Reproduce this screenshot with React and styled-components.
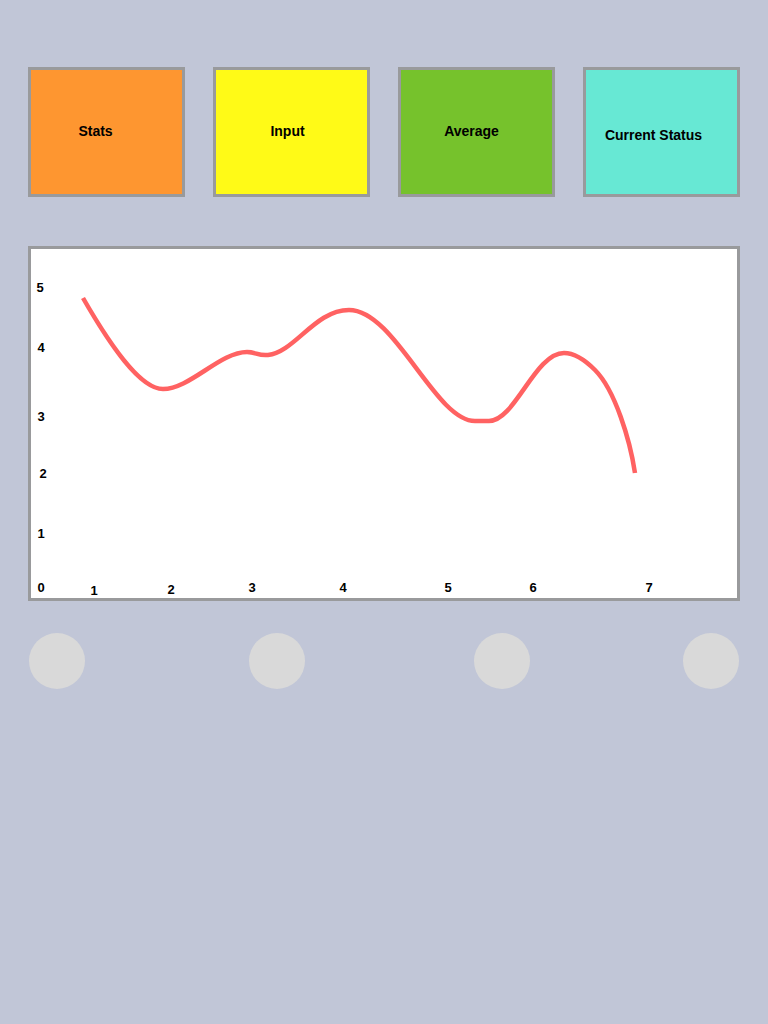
import React from "react";
import styled, { createGlobalStyle } from "styled-components";

const GlobalStyle = createGlobalStyle`
  body {
    margin: 0;
    background: #c1c6d7;
    font-family: "Liberation Sans", Arial, sans-serif;
  }
`;

const tiles = [
  { label: "Stats", color: "#fe9630", dx: -22, dy: -2 },
  { label: "Input", color: "#fffa17", dx: -8, dy: -2 },
  { label: "Average", color: "#76c22c", dx: -10, dy: -2 },
  { label: "Current Status", color: "#67e8d4", dx: -16, dy: 6 },
];

const yLabels = [
  ["5", 40, 287],
  ["4", 41, 347],
  ["3", 41, 416],
  ["2", 43, 473],
  ["1", 41, 533],
  ["0", 41, 587],
];

const xLabels = [
  ["1", 94, 590],
  ["2", 171, 589],
  ["3", 252, 587],
  ["4", 343, 587],
  ["5", 448, 587],
  ["6", 533, 587],
  ["7", 649, 587],
];

// left offsets of the round buttons below the chart
const dotOffsets = [1, 164, 169, 153];

const curve =
  "M83 298 C 110 345, 140 389, 163 389 C 190 389, 220 352, 247 352 " +
  "C 256 352, 258 356, 268 355 C 295 352, 315 310, 349 310 " +
  "C 395 310, 435 421, 475 421 L 489 421 C 515 421, 535 353, 564 353 " +
  "C 575 353, 585 360, 595 370 C 615 390, 630 440, 635 473";

const App = () => {
  return (
    <Page>
      <GlobalStyle />
      <Tiles>
        {tiles.map((t) => (
          <Tile key={t.label} color={t.color} dx={t.dx} dy={t.dy}>
            {t.label}
          </Tile>
        ))}
      </Tiles>
      <Chart>
        <svg width="706" height="349" viewBox="31 249 706 349">
          <path
            d={curve}
            fill="none"
            stroke="#ff6262"
            strokeWidth="4.5"
          />
          {[...yLabels, ...xLabels].map(([text, x, y], i) => (
            <AxisText key={i} x={x} y={y + 4.5} textAnchor="middle">
              {text}
            </AxisText>
          ))}
        </svg>
      </Chart>
      <Dots>
        {dotOffsets.map((o, i) => (
          <Dot key={i} offset={o} />
        ))}
      </Dots>
    </Page>
  );
};

export default App;

const Page = styled.div`
  min-height: 100vh;
  box-sizing: border-box;
  padding: 67px 28px 0 28px;
  width: 768px;
`;

const Tiles = styled.div`
  display: flex;
  gap: 28px;
`;

const Tile = styled.div`
  box-sizing: border-box;
  width: 157px;
  height: 130px;
  border: 3px solid #999a9c;
  background: ${({ color }) => color};
  display: flex;
  align-items: center;
  justify-content: center;
  padding-right: ${({ dx }) => -dx}px;
  padding-top: ${({ dy }) => Math.max(dy, 0)}px;
  padding-bottom: ${({ dy }) => Math.max(-dy, 0)}px;
  font-size: 14px;
  font-weight: 700;
  color: #000;
`;

const Chart = styled.div`
  margin-top: 49px;
  box-sizing: border-box;
  width: 712px;
  height: 355px;
  border: 3px solid #999a9c;
  background: #fff;
  svg {
    display: block;
  }
`;

const AxisText = styled.text`
  font-family: "Liberation Sans", Arial, sans-serif;
  font-size: 13px;
  font-weight: 700;
  fill: #000;
`;

const Dots = styled.div`
  margin-top: 32px;
  display: flex;
`;

const Dot = styled.div`
  flex: none;
  width: 56px;
  height: 56px;
  margin-left: ${({ offset }) => offset}px;
  border-radius: 50%;
  background: #d9d9d9;
`;
